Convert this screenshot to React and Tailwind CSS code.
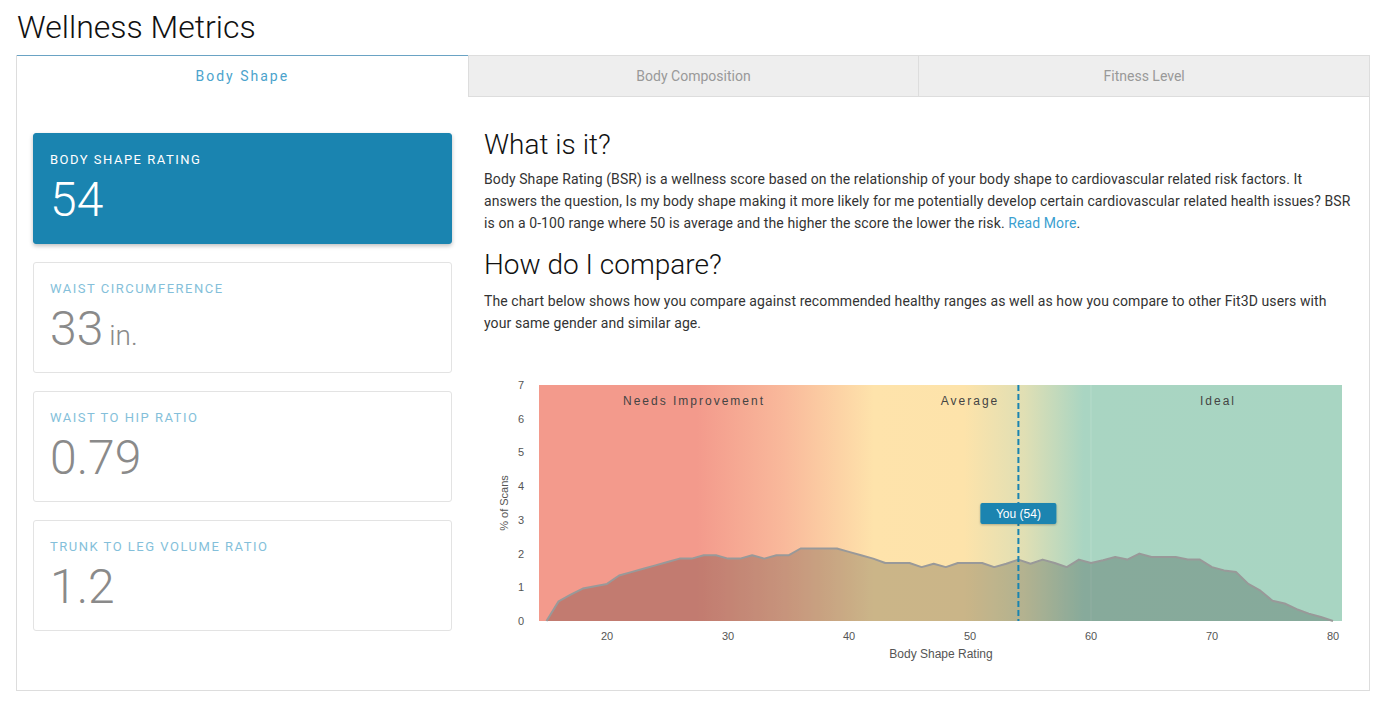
import React from 'react';

const metrics = [
  { label: 'Waist Circumference', value: '33', unit: 'in.' },
  { label: 'Waist to Hip Ratio', value: '0.79' },
  { label: 'Trunk to Leg Volume Ratio', value: '1.2' },
];

// distribution of scans (rating, % of scans)
const dist = [
  [15, 0], [16, 0.58], [17, 0.78], [18, 0.96], [19, 1.03], [20, 1.1], [21, 1.35], [22, 1.45],
  [23, 1.55], [24, 1.65], [25, 1.75], [26, 1.85], [27, 1.85], [28, 1.95], [29, 1.95], [30, 1.85],
  [31, 1.85], [32, 1.95], [33, 1.85], [34, 1.95], [35, 1.95], [36, 2.15], [37, 2.15], [38, 2.15],
  [39, 2.15], [40, 2.05], [41, 1.95], [42, 1.85], [43, 1.72], [44, 1.72], [45, 1.72], [46, 1.6],
  [47, 1.7], [48, 1.6], [49, 1.72], [50, 1.72], [51, 1.72], [52, 1.6], [53, 1.7], [54, 1.82],
  [55, 1.7], [56, 1.82], [57, 1.72], [58, 1.6], [59, 1.82], [60, 1.72], [61, 1.8], [62, 1.9],
  [63, 1.82], [64, 2.0], [65, 1.9], [66, 1.9], [67, 1.9], [68, 1.82], [69, 1.82], [70, 1.6],
  [71, 1.5], [72, 1.45], [73, 1.1], [74, 0.9], [75, 0.6], [76, 0.52], [77, 0.35], [78, 0.22],
  [79, 0.12], [80, 0],
];

const PL = 55, PR = 858, PT = 15, PB = 251;
const sx = (v) => PL + (v - 14.38) * 12.1;
const sy = (p) => PB - p * 33.71;

const Chart = ({ score }) => {
  const line = dist.map(([v, p], i) => `${i ? 'L' : 'M'}${sx(v).toFixed(1)},${sy(p).toFixed(1)}`).join(' ');
  const area = `${line} L${sx(80)},${PB} L${sx(15)},${PB} Z`;
  const youX = sx(score);

  return (
    <svg width="868" height="300" viewBox="0 0 868 300" className="block" style={{ fontFamily: '"Liberation Sans", Arial, sans-serif' }}>
      <defs>
        <linearGradient id="zones" gradientUnits="userSpaceOnUse" x1={PL} y1="0" x2={PR} y2="0">
          <stop offset={(213 - PL) / (PR - PL)} stopColor="#f39a8c" />
          <stop offset={(300 - PL) / (PR - PL)} stopColor="#f9b99b" />
          <stop offset={(390 - PL) / (PR - PL)} stopColor="#fee3ab" />
          <stop offset={(480 - PL) / (PR - PL)} stopColor="#fde3aa" />
          <stop offset={(540 - PL) / (PR - PL)} stopColor="#e0dfb4" />
          <stop offset={(600 - PL) / (PR - PL)} stopColor="#a9d5c2" />
          <stop offset="1" stopColor="#a8d5c2" />
        </linearGradient>
        <filter id="tipShadow" x="-10%" y="-20%" width="120%" height="160%">
          <feDropShadow dx="0" dy="1" stdDeviation="1" floodColor="#000" floodOpacity="0.25" />
        </filter>
      </defs>

      <rect x={PL} y={PT} width={PR - PL} height={PB - PT} fill="url(#zones)" />
      <line x1={sx(60)} y1={PT} x2={sx(60)} y2={PB} stroke="#b6dccb" strokeWidth="1" />

      <g fontSize="12" fill="#444" letterSpacing="2" textAnchor="middle">
        <text x="210" y="35">Needs Improvement</text>
        <text x="486" y="35">Average</text>
        <text x="734" y="35">Ideal</text>
      </g>

      <path d={area} fill="rgba(0,0,0,0.2)" />
      <path d={line} fill="none" stroke="#999" strokeWidth="2" strokeLinejoin="round" />

      <line x1={youX} y1={PT} x2={youX} y2={PB} stroke="#1a84b0" strokeWidth="2" strokeDasharray="6 3" />
      <rect x={youX - 38} y="133" width="76" height="21" rx="2" fill="#1a84b0" filter="url(#tipShadow)" />
      <text x={youX} y="148" fontSize="12" fill="#fff" textAnchor="middle">You ({score})</text>

      <g fontSize="11" fill="#555" textAnchor="end">
        {[0, 1, 2, 3, 4, 5, 6, 7].map((t) => (
          <text key={t} x="40" y={sy(t) + 4}>{t}</text>
        ))}
      </g>
      <g fontSize="11" fill="#555" textAnchor="middle">
        {[20, 30, 40, 50, 60, 70, 80].map((t) => (
          <text key={t} x={sx(t)} y="270">{t}</text>
        ))}
      </g>
      <text x="457" y="288" fontSize="12" fill="#555" textAnchor="middle">Body Shape Rating</text>
      <text x="0" y="0" fontSize="11" fill="#555" textAnchor="middle" transform="translate(24,133) rotate(-90)">% of Scans</text>
    </svg>
  );
};

const MetricCard = ({ label, value, unit, active }) => (
  <div
    className={`rounded-[3px] border pt-[18px] pb-[14px] px-4 ${
      active ? 'bg-[#1a84b0] border-[#1a84b0] shadow-[0_2px_4px_rgba(0,0,0,0.25)]' : 'bg-white border-[#e3e3e3]'
    }`}
  >
    <div className={`text-[13px] leading-4 uppercase tracking-[1.5px] ${active ? 'text-white' : 'text-[#84bfda]'}`}>
      {label}
    </div>
    <div className={`mt-[3px] h-[58px] text-[48px] leading-[58px] font-light ${active ? 'text-white' : 'text-[#8a8a8a]'}`}>
      {value}
      {unit && <span className="text-[28px] leading-none ml-1.5">{unit}</span>}
    </div>
  </div>
);

export default function App() {
  const tabs = ['Body Shape', 'Body Composition', 'Fitness Level'];

  return (
    <div className="min-h-screen bg-white pt-[7px] pl-4" style={{ fontFamily: 'Roboto, "Noto Sans", sans-serif' }}>
      <h1 className="text-[32px] leading-10 font-light text-[#111] pl-[1px]">Wellness Metrics</h1>

      <div className="mt-2 w-[1354px] border-x border-b border-[#dddddd]">
        <div className="grid grid-cols-3 h-[42px]">
          {tabs.map((t, i) =>
            i === 0 ? (
              <div key={t} className="flex items-center justify-center border-t border-[#6aa3c4] text-[14px] tracking-[2px] text-[#4ba3cc]">
                {t}
              </div>
            ) : (
              <div key={t} className="flex items-center justify-center bg-[#eeeeee] border-t border-l border-b border-[#dddddd] text-[14px] text-[#999]">
                {t}
              </div>
            )
          )}
        </div>

        <div className="flex gap-8 pt-[36px] pl-4 pr-4 pb-[20px]">
          <div className="w-[419px] shrink-0 flex flex-col gap-[18px]">
            <MetricCard label="Body Shape Rating" value="54" active />
            {metrics.map((m) => (
              <MetricCard key={m.label} {...m} />
            ))}
          </div>

          <div className="flex-1 -mt-1">
            <h2 className="text-[28px] leading-8 font-light text-[#111]">What is it?</h2>
            <p className="mt-[7px] -mr-1 text-[14px] leading-[22px] tracking-[0.1px] text-[#333]">
              Body Shape Rating (BSR) is a wellness score based on the relationship of your body shape to cardiovascular related risk factors. It answers the question, Is my body shape making it more likely for me potentially develop certain cardiovascular related health issues? BSR is on a 0-100 range where 50 is average and the higher the score the lower the risk.{' '}
              <a className="text-[#3b9fd0]">Read More</a>.
            </p>
            <h2 className="mt-[15px] text-[28px] leading-8 font-light text-[#111]">How do I compare?</h2>
            <p className="mt-[9px] -mr-1 text-[14px] leading-[22px] tracking-[0.1px] text-[#333]">
              The chart below shows how you compare against recommended healthy ranges as well as how you compare to other Fit3D users with your same gender and similar age.
            </p>
            <div className="mt-[36px]">
              <Chart score={54} />
            </div>
          </div>
        </div>
      </div>
    </div>
  );
}
